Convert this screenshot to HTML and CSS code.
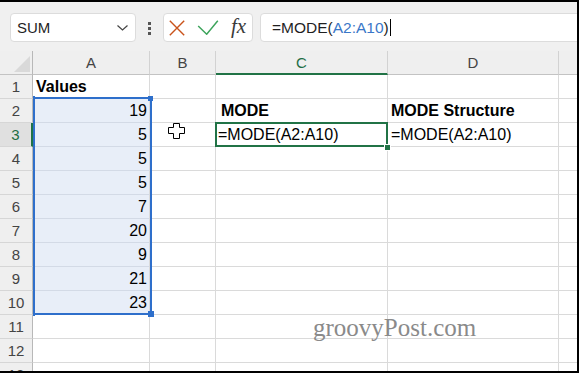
FILE: index.html
```html
<!DOCTYPE html>
<html lang="en">

<head>
    <meta charset="UTF-8">
    <meta name="viewport" content="width=device-width, initial-scale=1.0">

    <title>MODE - Excel</title>
    <link rel="stylesheet" href="styles.css">

</head>

<body>
    <div class="frame">
        <!-- Formula bar -->
        <div class="toolbar">
            <div class="namebox">
                <span>SUM</span>
                <svg width="11" height="6" viewBox="0 0 11 6"><polyline points="0.5,0.5 5.5,5 10.5,0.5" fill="none" stroke="#444" stroke-width="1.2"/></svg>
            </div>
            <div class="grip"><i></i><i></i><i></i></div>
            <div class="fxbox">
                <svg width="16" height="16" viewBox="0 0 16 16"><path d="M0.8 0.8 L15.2 15.2 M15.2 0.8 L0.8 15.2" stroke="#c9521a" stroke-width="1.4"/></svg>
                <svg width="22" height="15" viewBox="0 0 22 15"><polyline points="1.2,6 9.7,14.2 20.8,0.8" fill="none" stroke="#3da45c" stroke-width="1.5"/></svg>
                <span class="fx">fx</span>
            </div>
            <div class="formula">=MODE(<span class="ref">A2:A10</span>)<span class="caret"></span></div>
        </div>

        <!-- Sheet -->
        <div class="sheet">
            <div class="corner"><svg width="16" height="16" viewBox="0 0 16 16"><polygon points="16,0 16,16 0,16" fill="#d9d9d9"/></svg></div>
            <div class="ch">A</div>
            <div class="ch">B</div>
            <div class="ch cur">C</div>
            <div class="ch">D</div>
            <div class="ch e"></div>

            <div class="rh">1</div><div class="c b">Values</div><div class="c"></div><div class="c"></div><div class="c"></div><div class="c e"></div>
            <div class="rh">2</div><div class="c num sel">19</div><div class="c"></div><div class="c b pad">MODE</div><div class="c b">MODE Structure</div><div class="c e"></div>
            <div class="rh cur">3</div><div class="c num sel">5</div><div class="c"></div><div class="c flush">=MODE(A2:A10)</div><div class="c">=MODE(A2:A10)</div><div class="c e"></div>
            <div class="rh">4</div><div class="c num sel">5</div><div class="c"></div><div class="c"></div><div class="c"></div><div class="c e"></div>
            <div class="rh">5</div><div class="c num sel">5</div><div class="c"></div><div class="c"></div><div class="c"></div><div class="c e"></div>
            <div class="rh">6</div><div class="c num sel">7</div><div class="c"></div><div class="c"></div><div class="c"></div><div class="c e"></div>
            <div class="rh">7</div><div class="c num sel">20</div><div class="c"></div><div class="c"></div><div class="c"></div><div class="c e"></div>
            <div class="rh">8</div><div class="c num sel">9</div><div class="c"></div><div class="c"></div><div class="c"></div><div class="c e"></div>
            <div class="rh">9</div><div class="c num sel">21</div><div class="c"></div><div class="c"></div><div class="c"></div><div class="c e"></div>
            <div class="rh">10</div><div class="c num sel">23</div><div class="c"></div><div class="c"></div><div class="c"></div><div class="c e"></div>
            <div class="rh">11</div><div class="c"></div><div class="c"></div><div class="c"></div><div class="c"></div><div class="c e"></div>
            <div class="rh">12</div><div class="c"></div><div class="c"></div><div class="c"></div><div class="c"></div><div class="c e"></div>
            <div class="rh">13</div><div class="c"></div><div class="c"></div><div class="c"></div><div class="c"></div><div class="c e"></div>

            <!-- range reference A2:A10 -->
            <div class="range"></div>
            <div class="grab tl"></div>
            <div class="grab tr"></div>
            <div class="grab bl"></div>
            <div class="grab br"></div>

            <!-- active cell C3 -->
            <div class="active"></div>
            <div class="fill"></div>

            <svg class="pointer" width="17" height="16" viewBox="0 0 17 16"><polygon points="5.5,0.5 11.5,0.5 11.5,4.5 16.5,4.5 16.5,10.5 11.5,10.5 11.5,15.5 5.5,15.5 5.5,10.5 0.5,10.5 0.5,4.5 5.5,4.5" fill="#fff" stroke="#000" stroke-width="1"/></svg>

            <div class="mark">groovyPost.com</div>
        </div>
    </div>
</body>

</html>
```

FILE: styles.css
```css
body {
    margin: 0;
    font-family: "Liberation Sans", Arial, sans-serif;
    color: #000;
}

.frame {
    width: 579px;
    height: 373px;
    box-sizing: border-box;
    border-top: 2px solid #000;
    border-right: 2px solid #000;
    border-bottom: 2px solid #000;
    overflow: hidden;
    background-color: #fff;
}

/* Formula bar */
.toolbar {
    height: 49px;
    box-sizing: border-box;
    padding: 11px 0 0 10px;
    background-color: #f0f0f0;
    display: flex;
    align-items: flex-start;
}

.namebox,
.fxbox,
.formula {
    height: 29px;
    box-sizing: border-box;
    border: 1px solid #dcdcdc;
    border-radius: 4px;
    background-color: #fff;
    display: flex;
    align-items: center;
}

.namebox {
    width: 126px;
    justify-content: space-between;
    padding: 0 7px 0 6px;
    font-size: 15px;
    color: #1f1f1f;
}

.grip {
    margin: 9px 0 0 11px;
    width: 4px;
    display: flex;
    flex-direction: column;
    align-items: center;
    gap: 2px;
}

.grip i {
    display: block;
    width: 3px;
    height: 3px;
    background-color: #555;
}

.fxbox {
    width: 90px;
    margin-left: 12px;
    padding-left: 5px;
    gap: 12px;
}

.fx {
    font-family: "Liberation Serif", "Times New Roman", serif;
    font-style: italic;
    font-size: 21px;
    color: #3a3a3a;
    margin-top: -2px;
}

.formula {
    flex: 1;
    margin-left: 7px;
    margin-right: -10px;
    padding-left: 11px;
    font-size: 15.5px;
    color: #1f1f1f;
    white-space: nowrap;
}

.ref {
    color: #3a77c8;
}

.caret {
    display: inline-block;
    width: 1px;
    height: 17px;
    margin-left: 1px;
    background-color: #000;
}

/* Sheet grid */
.sheet {
    position: relative;
    height: 320px;
    overflow: hidden;
    display: grid;
    grid-template-columns: 33px 117px 66px 172px 171px 18px;
    grid-auto-rows: 24px;
}

.corner {
    background-color: #efefef;
    border-right: 1px solid #b8b8b8;
    border-bottom: 1px solid #c3c3c3;
    display: flex;
    justify-content: flex-end;
    align-items: flex-end;
    padding: 0 2px 2px 0;
}

.ch {
    background-color: #efefef;
    border-right: 1px solid #d2d2d2;
    border-bottom: 1px solid #c3c3c3;
    display: flex;
    align-items: center;
    justify-content: center;
    font-size: 15px;
    color: #444;
}

.ch.cur {
    border-bottom: 2px solid #217346;
    color: #1f6e45;
    padding-top: 1px;
}

.rh {
    background-color: #efefef;
    border-right: 1px solid #b8b8b8;
    border-bottom: 1px solid #d6d6d6;
    display: flex;
    align-items: flex-end;
    justify-content: center;
    padding-bottom: 2px;
    font-size: 15px;
    line-height: 18px;
    color: #444;
}

.rh.cur {
    background-color: #e0e0e0;
    border-right: 2px solid #217346;
    color: #1f6e45;
}

.c {
    border-right: 1px solid #dadada;
    border-bottom: 1px solid #dadada;
    display: flex;
    align-items: flex-end;
    padding: 0 3px 2px;
    font-size: 16px;
    line-height: 18px;
    white-space: nowrap;
}

.corner, .ch, .rh, .c {
    box-sizing: border-box;
}

.e {
    border-right: none;
}

.b {
    font-weight: bold;
}

.pad {
    padding-left: 5px;
}

.flush {
    padding-left: 2px;
}

.num {
    justify-content: flex-end;
    padding-right: 2px;
}

.sel {
    background-color: #e8eef8;
    border-bottom-color: #d3dae6;
}

/* Overlays on the grid */
.range {
    position: absolute;
    left: 33px;
    top: 46px;
    width: 119px;
    height: 218px;
    box-sizing: border-box;
    border: 2px solid #2e6fcb;
}

.grab {
    position: absolute;
    background-color: #2e6fcb;
}

.grab.tl { left: 33px; top: 45px; width: 2px; height: 5px; }
.grab.tr { left: 148px; top: 45px; width: 5px; height: 5px; }
.grab.bl { left: 33px; top: 260px; width: 2px; height: 5px; }
.grab.br { left: 148px; top: 260px; width: 6px; height: 6px; }

.active {
    position: absolute;
    left: 215px;
    top: 71px;
    width: 173px;
    height: 25px;
    box-sizing: border-box;
    border: 2px solid #217346;
}

.fill {
    position: absolute;
    left: 384px;
    top: 93px;
    width: 5px;
    height: 5px;
    border: 1px solid #fff;
    background-color: #217346;
}

.pointer {
    position: absolute;
    left: 168px;
    top: 72px;
}

.mark {
    position: absolute;
    left: 313px;
    top: 263px;
    font-family: "Liberation Serif", "Times New Roman", serif;
    font-size: 25px;
    line-height: 28px;
    color: #8a8a8a;
}
```
